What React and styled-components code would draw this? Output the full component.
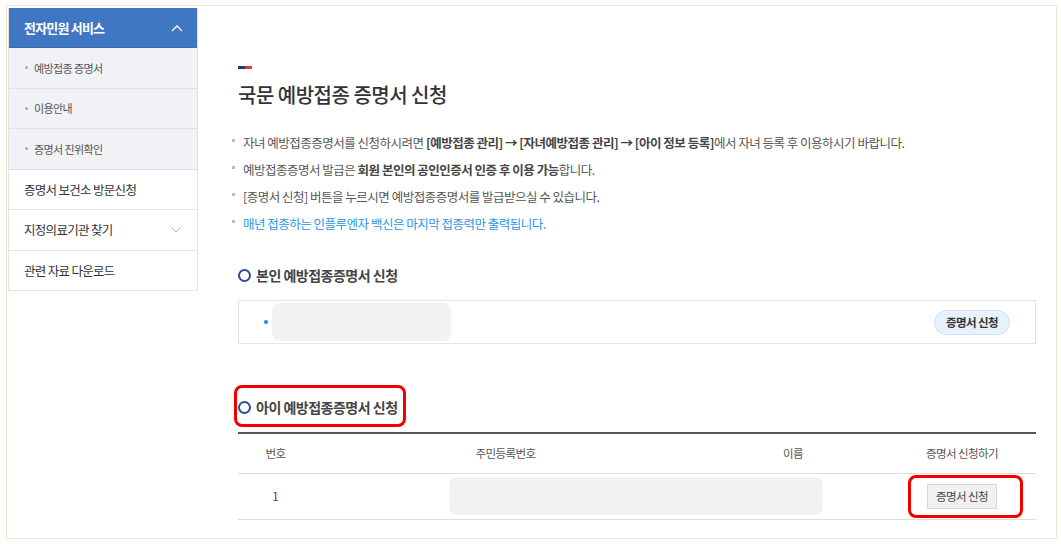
import React from "react";
import styled, { createGlobalStyle } from "styled-components";

const Global = createGlobalStyle`
  html, body { margin: 0; padding: 0; background: #fff; }
  body { font-family: "Noto Sans CJK KR", "Noto Sans", sans-serif; color: #333; }
  * { box-sizing: border-box; }
`;

const Frame = styled.div`
  margin: 5px 0 0 6px;
  width: 1051px;
  height: 534px;
  border: 1px solid #ede6cf;
  padding: 2px 0 0 1px;
  display: flex;
  align-items: flex-start;
  overflow: hidden;
`;

const Sidebar = styled.nav`
  width: 190px;
  flex: none;
  border-left: 1px solid #e3e3e3;
  border-right: 1px solid #e3e3e3;
`;

const SideHead = styled.div`
  height: 40px;
  background: #4077c3;
  color: #fff;
  font-size: 13px;
  font-weight: 700;
  letter-spacing: -0.8px;
  display: flex;
  align-items: center;
  justify-content: space-between;
  padding: 0 14px 0 15px;
  border-bottom: 1px solid #3a6cb3;
`;

const SubItem = styled.div`
  height: 40.5px;
  background: #f1f2f5;
  border-bottom: 1px solid #e1e2e5;
  display: flex;
  align-items: center;
  padding-left: 16px;
  font-size: 11px;
  color: #555;
  letter-spacing: -0.6px;
  gap: 6px;
  &::before {
    content: "";
    width: 3px;
    height: 3px;
    background: #aaa;
    border-radius: 50%;
  }
`;

const MainItem = styled.div`
  height: 40.5px;
  background: #fff;
  border-bottom: 1px solid #e3e3e3;
  display: flex;
  align-items: center;
  justify-content: space-between;
  padding: 0 15px 0 15px;
  font-size: 12.5px;
  color: #333;
  letter-spacing: -0.7px;
`;

const Content = styled.main`
  flex: 1;
  padding: 58px 20px 0 40px;
`;

const Marker = styled.div`
  width: 14px;
  height: 3px;
  display: flex;
  & > span { flex: 1; }
  & > span:first-child { background: #1d3b78; }
  & > span:last-child { background: #e8334a; }
`;

const Title = styled.h1`
  margin: 13px 0 0;
  font-size: 20px;
  line-height: 26px;
  font-weight: 500;
  color: #333;
  letter-spacing: -0.5px;
`;

const Notes = styled.ul`
  list-style: none;
  margin: 21px 0 0 -6px;
  padding: 0;
`;

const Note = styled.li`
  display: flex;
  align-items: center;
  height: 27px;
  font-size: 12.5px;
  letter-spacing: -0.5px;
  color: ${p => (p.$blue ? "#2a97e0" : "#555")};
  gap: 8px;
  &::before {
    content: "";
    width: 3px;
    height: 3px;
    background: #bbb;
    flex: none;
    margin-top: -4px;
  }
  b { font-weight: 700; color: #444; }
`;

const SectionTitle = styled.h2`
  margin: ${p => p.$mt}px 0 0;
  display: flex;
  align-items: center;
  gap: 5px;
  font-size: 14px;
  font-weight: 700;
  color: #444;
  letter-spacing: -0.5px;
  height: 24px;
  position: relative;
  &::before {
    content: "";
    width: 9px;
    height: 9px;
    border: 2px solid #2e4d8e;
    border-radius: 50%;
    margin-left: 0;
  }
`;

const Highlight = styled.span`
  position: absolute;
  left: -4px;
  top: -10px;
  width: 172px;
  height: 42px;
  border: 3px solid #f20000;
  border-radius: 8px;
`;

const SelfBox = styled.div`
  margin-top: 13px;
  height: 44px;
  border: 1px solid #e4e4e4;
  display: flex;
  align-items: center;
  padding: 0 25px 0 25px;
`;

const Dot = styled.span`
  width: 4px;
  height: 4px;
  border-radius: 50%;
  background: #1a8fdb;
  flex: none;
`;

const Redact = styled.div`
  background: #f2f2f2;
  border-radius: 8px;
  width: ${p => p.$w}px;
  height: ${p => p.$h}px;
  margin-left: ${p => p.$ml}px;
`;

const PillButton = styled.button`
  margin-left: auto;
  height: 25px;
  padding: 0 11px;
  border: 1px solid #cfe0f2;
  background: #e8f2fd;
  border-radius: 13px;
  font-family: inherit;
  font-size: 11.5px;
  font-weight: 700;
  color: #333;
  letter-spacing: -0.6px;
`;

const Table = styled.table`
  margin-top: 13px;
  width: 100%;
  border-collapse: collapse;
  border-top: 2px solid #555;
  table-layout: fixed;
  th {
    height: 40px;
    font-weight: 400;
    font-size: 11.5px;
    color: #555;
    letter-spacing: -0.6px;
    border-bottom: 1px solid #dedede;
  }
  td {
    height: 46px;
    font-size: 11.5px;
    color: #444;
    text-align: center;
    border-bottom: 1px solid #dedede;
    position: relative;
  }
`;

const GrayButton = styled.button`
  height: 25px;
  padding: 0 8px;
  border: 1px solid #d6d6d6;
  background: #f1f1f1;
  font-family: inherit;
  font-size: 11.5px;
  color: #444;
  letter-spacing: -0.6px;
`;

const CellHighlight = styled.span`
  position: absolute;
  left: 20px;
  top: 1px;
  width: 115px;
  height: 43px;
  border: 3px solid #f20000;
  border-radius: 8px;
`;

const ChevronUp = () => (
  <svg width="12" height="8" viewBox="0 0 12 8" fill="none">
    <path d="M1 7 L6 2 L11 7" stroke="#fff" strokeWidth="1.3" />
  </svg>
);

const ChevronDown = () => (
  <svg width="12" height="8" viewBox="0 0 12 8" fill="none">
    <path d="M1 1 L6 6 L11 1" stroke="#bbb" strokeWidth="1" />
  </svg>
);

export default function App() {
  return (
    <>
      <Global />
      <Frame>
        <Sidebar>
          <SideHead>
            전자민원 서비스
            <ChevronUp />
          </SideHead>
          <SubItem>예방접종 증명서</SubItem>
          <SubItem>이용안내</SubItem>
          <SubItem>증명서 진위확인</SubItem>
          <MainItem>증명서 보건소 방문신청</MainItem>
          <MainItem>
            지정의료기관 찾기
            <ChevronDown />
          </MainItem>
          <MainItem>관련 자료 다운로드</MainItem>
        </Sidebar>
        <Content>
          <Marker>
            <span />
            <span />
          </Marker>
          <Title>국문 예방접종 증명서 신청</Title>
          <Notes>
            <Note>
              <span>
                자녀 예방접종증명서를 신청하시려면 <b>[예방접종 관리]</b> <b>→</b>{" "}
                <b>[자녀예방접종 관리]</b> <b>→</b> <b>[아이 정보 등록]</b>에서 자녀 등록 후
                이용하시기 바랍니다.
              </span>
            </Note>
            <Note>
              <span>
                예방접종증명서 발급은 <b>회원 본인의 공인인증서 인증 후 이용 가능</b>합니다.
              </span>
            </Note>
            <Note>
              <span>[증명서 신청] 버튼을 누르시면 예방접종증명서를 발급받으실 수 있습니다.</span>
            </Note>
            <Note $blue>
              <span>매년 접종하는 인플루엔자 백신은 마지막 접종력만 출력됩니다.</span>
            </Note>
          </Notes>
          <SectionTitle $mt={26}>본인 예방접종증명서 신청</SectionTitle>
          <SelfBox>
            <Dot />
            <Redact $w={179} $h={38} $ml={4} />
            <PillButton>증명서 신청</PillButton>
          </SelfBox>
          <SectionTitle $mt={51}>
            아이 예방접종증명서 신청
            <Highlight />
          </SectionTitle>
          <Table>
            <colgroup>
              <col style={{ width: 75 }} />
              <col style={{ width: 385 }} />
              <col style={{ width: 190 }} />
              <col />
            </colgroup>
            <thead>
              <tr>
                <th>번호</th>
                <th>주민등록번호</th>
                <th>이름</th>
                <th>증명서 신청하기</th>
              </tr>
            </thead>
            <tbody>
              <tr>
                <td>1</td>
                <td colSpan={2}>
                  <Redact $w={374} $h={38} $ml={135} />
                </td>
                <td>
                  <GrayButton>증명서 신청</GrayButton>
                  <CellHighlight />
                </td>
              </tr>
            </tbody>
          </Table>
        </Content>
      </Frame>
    </>
  );
}
